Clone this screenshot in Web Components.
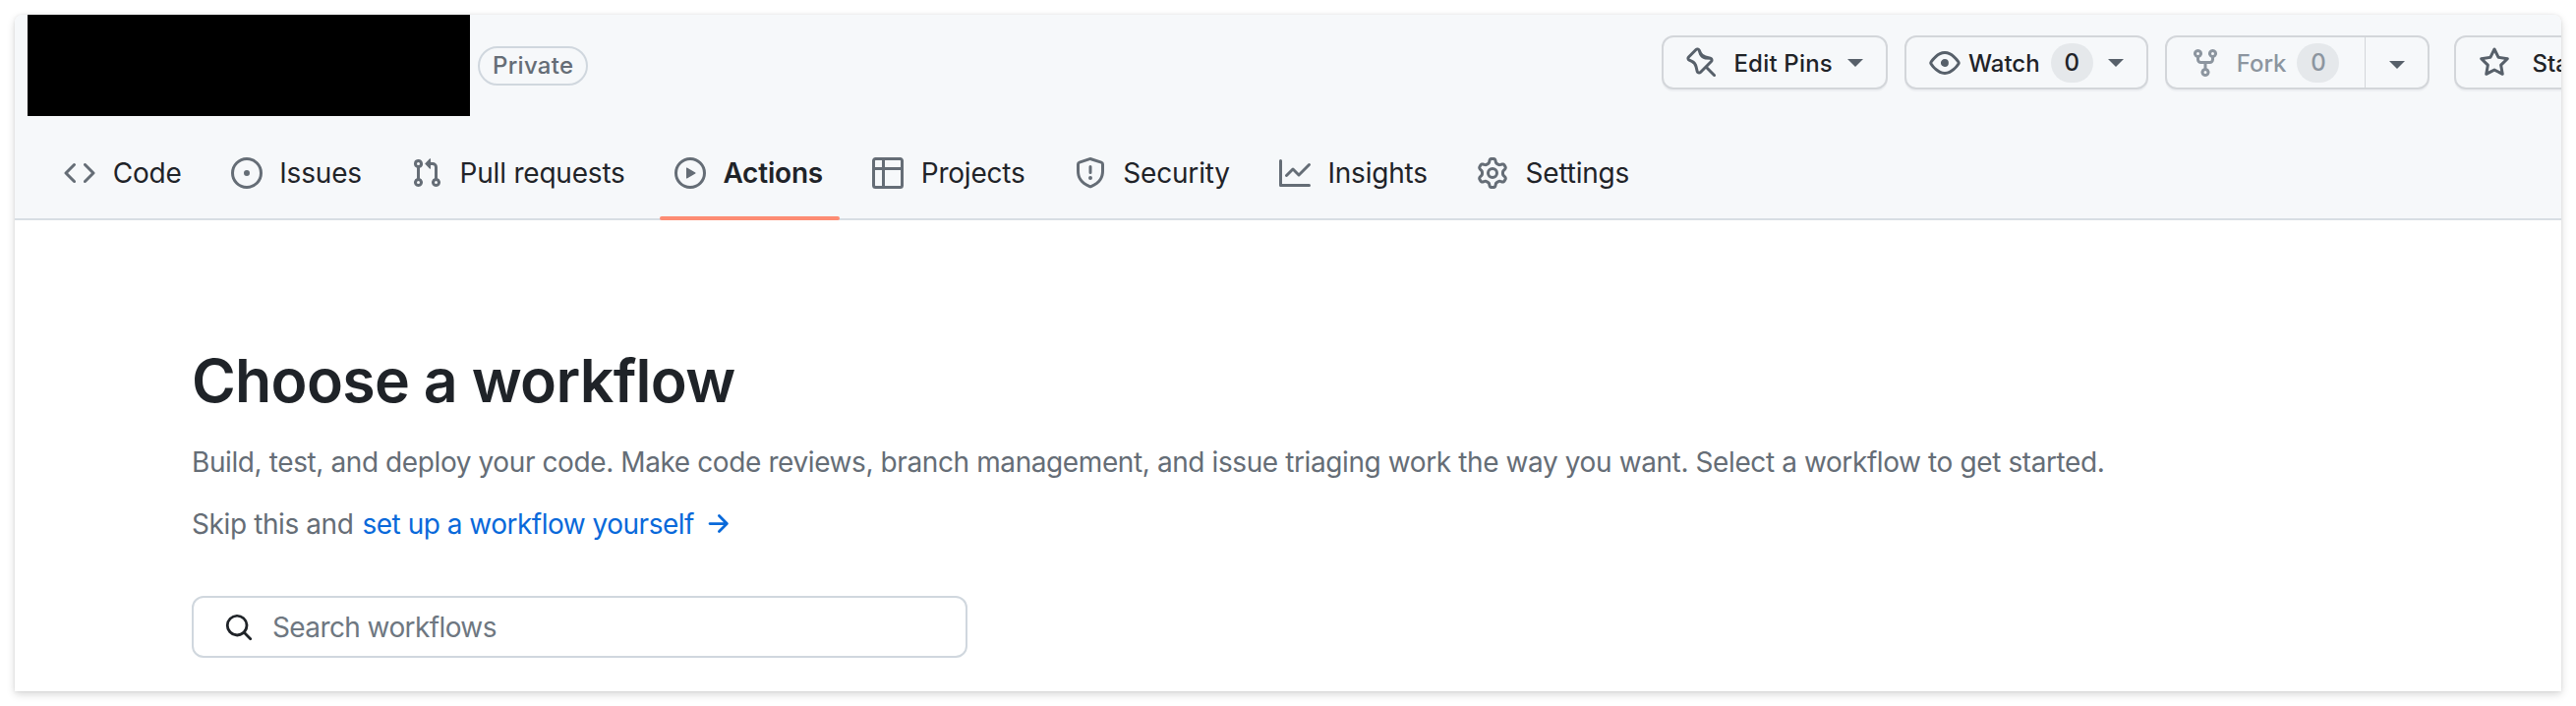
<!DOCTYPE html>
<html>
<head>
<meta charset="utf-8">
<title>Choose a workflow</title>
<style>
    html, body { margin: 0; background: #fff; }
    body { font-family: Inter, "Liberation Sans", sans-serif; color: #1f2328; }
</style>
</head>
<body>
<repo-window>
    <repo-head slot="head"></repo-head>
    <workflow-intro></workflow-intro>
</repo-window>

<script>
const ICONS = {
    code: 'm11.28 3.22 4.25 4.25a.75.75 0 0 1 0 1.06l-4.25 4.25a.749.749 0 0 1-1.275-.326.749.749 0 0 1 .215-.734L13.94 8l-3.72-3.72a.749.749 0 0 1 .326-1.275.749.749 0 0 1 .734.215Zm-6.56 0a.751.751 0 0 1 1.042.018.751.751 0 0 1 .018 1.042L2.06 8l3.72 3.72a.749.749 0 0 1-.326 1.275.749.749 0 0 1-.734-.215L.47 8.53a.75.75 0 0 1 0-1.06Z',
    issue: 'M8 9.5a1.5 1.5 0 1 0 0-3 1.5 1.5 0 0 0 0 3Z M8 0a8 8 0 1 1 0 16A8 8 0 0 1 8 0ZM1.5 8a6.5 6.5 0 1 0 13 0 6.5 6.5 0 0 0-13 0Z',
    pull: 'M1.5 3.25a2.25 2.25 0 1 1 3 2.122v5.256a2.251 2.251 0 1 1-1.5 0V5.372A2.25 2.25 0 0 1 1.5 3.25Zm5.677-.177L9.573.677A.25.25 0 0 1 10 .854V2.5h1A2.5 2.5 0 0 1 13.5 5v5.628a2.251 2.251 0 1 1-1.5 0V5a1 1 0 0 0-1-1h-1v1.646a.25.25 0 0 1-.427.177L7.177 3.427a.25.25 0 0 1 0-.354ZM3.75 2.5a.75.75 0 1 0 0 1.5.75.75 0 0 0 0-1.5Zm0 9.5a.75.75 0 1 0 0 1.5.75.75 0 0 0 0-1.5Zm8.25.75a.75.75 0 1 0 1.5 0 .75.75 0 0 0-1.5 0Z',
    play: 'M8 0a8 8 0 1 1 0 16A8 8 0 0 1 8 0ZM1.5 8a6.5 6.5 0 1 0 13 0 6.5 6.5 0 0 0-13 0Zm4.879-2.773 4.264 2.559a.25.25 0 0 1 0 .428l-4.264 2.559A.25.25 0 0 1 6 10.559V5.442a.25.25 0 0 1 .379-.215Z',
    table: 'M0 1.75C0 .784.784 0 1.75 0h12.5C15.216 0 16 .784 16 1.75v12.5A1.75 1.75 0 0 1 14.25 16H1.75A1.75 1.75 0 0 1 0 14.25ZM6.5 6.5v8h7.75a.25.25 0 0 0 .25-.25V6.5Zm8-1.5V1.75a.25.25 0 0 0-.25-.25H6.5V5Zm-13 1.5v7.75c0 .138.112.25.25.25H5v-8ZM5 5V1.5H1.75a.25.25 0 0 0-.25.25V5Z',
    shield: 'M7.467.133a1.748 1.748 0 0 1 1.066 0l5.25 1.68A1.75 1.75 0 0 1 15 3.48V7c0 1.566-.32 3.182-1.303 4.682-.983 1.498-2.585 2.813-5.032 3.855a1.697 1.697 0 0 1-1.33 0c-2.447-1.042-4.049-2.357-5.032-3.855C1.32 10.182 1 8.566 1 7V3.48a1.75 1.75 0 0 1 1.217-1.667Zm.61 1.429a.25.25 0 0 0-.153 0l-5.25 1.68a.25.25 0 0 0-.174.238V7c0 1.358.275 2.666 1.057 3.86.784 1.194 2.121 2.34 4.366 3.297a.196.196 0 0 0 .154 0c2.245-.956 3.582-2.104 4.366-3.298C13.225 9.666 13.5 8.36 13.5 7V3.48a.251.251 0 0 0-.174-.237l-5.25-1.68ZM8.75 4.75v3a.75.75 0 0 1-1.5 0v-3a.75.75 0 0 1 1.5 0ZM9 10.5a1 1 0 1 1-2 0 1 1 0 0 1 2 0Z',
    graph: 'M1.5 1.75V13.5h13.75a.75.75 0 0 1 0 1.5H.75a.75.75 0 0 1-.75-.75V1.75a.75.75 0 0 1 1.5 0Zm14.28 2.53-5.25 5.25a.75.75 0 0 1-1.06 0L7 7.06 4.28 9.78a.751.751 0 0 1-1.042-.018.751.751 0 0 1-.018-1.042l3.25-3.25a.75.75 0 0 1 1.06 0L10 7.94l4.72-4.72a.751.751 0 0 1 1.042.018.751.751 0 0 1 .018 1.042Z',
    gear: 'M8 0a8.2 8.2 0 0 1 .701.031C9.444.095 9.99.645 10.16 1.29l.288 1.107c.018.066.079.158.212.224.231.114.454.243.668.386.123.082.233.09.299.071l1.103-.303c.644-.176 1.392.021 1.82.63.27.385.506.792.704 1.218.315.675.111 1.422-.364 1.891l-.814.806c-.049.048-.098.147-.088.294.016.257.016.515 0 .772-.01.147.038.246.088.294l.814.806c.475.469.679 1.216.364 1.891a7.977 7.977 0 0 1-.704 1.217c-.428.61-1.176.807-1.82.63l-1.102-.302c-.067-.019-.177-.011-.3.071a5.909 5.909 0 0 1-.668.386c-.133.066-.194.158-.211.224l-.29 1.106c-.168.646-.715 1.196-1.458 1.26a8.006 8.006 0 0 1-1.402 0c-.743-.064-1.289-.614-1.458-1.26l-.289-1.106c-.018-.066-.079-.158-.212-.224a5.738 5.738 0 0 1-.668-.386c-.123-.082-.233-.09-.299-.071l-1.103.303c-.644.176-1.392-.021-1.82-.63a8.12 8.12 0 0 1-.704-1.218c-.315-.675-.111-1.422.363-1.891l.815-.806c.05-.048.098-.147.088-.294a6.214 6.214 0 0 1 0-.772c.01-.147-.038-.246-.088-.294l-.815-.806C.635 6.045.431 5.298.746 4.623a7.92 7.92 0 0 1 .704-1.217c.428-.61 1.176-.807 1.82-.63l1.102.302c.067.019.177.011.3-.071.214-.143.437-.272.668-.386.133-.066.194-.158.211-.224l.29-1.106C6.009.645 6.556.095 7.299.03 7.53.01 7.764 0 8 0Zm-.571 1.525c-.036.003-.108.036-.137.146l-.289 1.105c-.147.561-.549.967-.998 1.189-.173.086-.34.183-.5.29-.417.278-.97.423-1.529.27l-1.103-.303c-.109-.03-.175.016-.195.045-.22.312-.412.644-.573.99-.014.031-.021.11.059.19l.815.806c.411.406.562.957.53 1.456a4.709 4.709 0 0 0 0 .582c.032.499-.119 1.05-.53 1.456l-.815.806c-.081.08-.073.159-.059.19.162.346.353.677.573.989.02.03.085.076.195.046l1.102-.303c.56-.153 1.113-.008 1.53.27.161.107.328.204.501.29.447.222.85.629.997 1.189l.289 1.105c.029.109.101.143.137.146a6.6 6.6 0 0 0 1.142 0c.036-.003.108-.036.137-.146l.289-1.105c.147-.561.549-.967.998-1.189.173-.086.34-.183.5-.29.417-.278.97-.423 1.529-.27l1.103.303c.109.029.175-.016.195-.045.22-.313.411-.644.573-.99.014-.031.021-.11-.059-.19l-.815-.806c-.411-.406-.562-.957-.53-1.456a4.709 4.709 0 0 0 0-.582c-.032-.499.119-1.05.53-1.456l.815-.806c.081-.08.073-.159.059-.19a6.464 6.464 0 0 0-.573-.989c-.02-.03-.085-.076-.195-.046l-1.102.303c-.56.153-1.113.008-1.53-.27a4.44 4.44 0 0 0-.501-.29c-.447-.222-.85-.629-.997-1.189l-.289-1.105c-.029-.11-.101-.143-.137-.146a6.6 6.6 0 0 0-1.142 0ZM11 8a3 3 0 1 1-6 0 3 3 0 0 1 6 0ZM9.5 8a1.5 1.5 0 1 0-3.001.001A1.5 1.5 0 0 0 9.5 8Z',
    pin: 'M4.456.734a1.75 1.75 0 0 1 2.826.504l.613 1.327a3.08 3.08 0 0 0 2.084 1.707l2.454.584c1.332.317 1.8 1.972.832 2.94L11.06 10l3.72 3.72a.748.748 0 0 1-.332 1.265.75.75 0 0 1-.729-.205L10 11.06l-2.204 2.205c-.968.968-2.623.5-2.94-.832l-.584-2.454a3.08 3.08 0 0 0-1.707-2.084l-1.327-.613a1.75 1.75 0 0 1-.504-2.826L4.456.734ZM5.92 1.866a.25.25 0 0 0-.404-.072L1.794 5.516a.25.25 0 0 0 .072.404l1.328.613A4.582 4.582 0 0 1 5.73 9.63l.584 2.454a.25.25 0 0 0 .42.12l5.47-5.47a.25.25 0 0 0-.12-.42L9.63 6.23a4.582 4.582 0 0 1-3.098-2.537L5.92 1.866Z',
    eye: 'M8 2c1.981 0 3.671.992 4.933 2.078 1.27 1.091 2.187 2.345 2.637 3.023a1.62 1.62 0 0 1 0 1.798c-.45.678-1.367 1.932-2.637 3.023C11.67 13.008 9.981 14 8 14c-1.981 0-3.671-.992-4.933-2.078C1.797 10.83.88 9.576.43 8.898a1.62 1.62 0 0 1 0-1.798c.45-.677 1.367-1.931 2.637-3.022C4.33 2.992 6.019 2 8 2ZM1.679 7.932a.12.12 0 0 0 0 .136c.411.622 1.241 1.75 2.366 2.717C5.176 11.758 6.527 12.5 8 12.5c1.473 0 2.825-.742 3.955-1.715 1.124-.967 1.954-2.096 2.366-2.717a.12.12 0 0 0 0-.136c-.412-.621-1.242-1.75-2.366-2.717C10.824 4.242 9.473 3.5 8 3.5c-1.473 0-2.825.742-3.955 1.715-1.124.967-1.954 2.096-2.366 2.717ZM8 10a2 2 0 1 1-.001-3.999A2 2 0 0 1 8 10Z',
    fork: 'M5 5.372v.878c0 .414.336.75.75.75h4.5a.75.75 0 0 0 .75-.75v-.878a2.25 2.25 0 1 1 1.5 0v.878a2.25 2.25 0 0 1-2.25 2.25h-1.5v2.128a2.251 2.251 0 1 1-1.5 0V8.5h-1.5A2.25 2.25 0 0 1 3.5 6.25v-.878a2.25 2.25 0 1 1 1.5 0ZM5 3.25a.75.75 0 1 0-1.5 0 .75.75 0 0 0 1.5 0Zm6.75.75a.75.75 0 1 0 0-1.5.75.75 0 0 0 0 1.5Zm-3 8.75a.75.75 0 1 0-1.5 0 .75.75 0 0 0 1.5 0Z',
    star: 'M8 .25a.75.75 0 0 1 .673.418l1.882 3.815 4.21.612a.75.75 0 0 1 .416 1.279l-3.046 2.97.719 4.192a.751.751 0 0 1-1.088.791L8 12.347l-3.766 1.98a.75.75 0 0 1-1.088-.79l.72-4.194L.818 6.374a.75.75 0 0 1 .416-1.28l4.21-.611L7.327.668A.75.75 0 0 1 8 .25Zm0 2.445L6.615 5.5a.75.75 0 0 1-.564.41l-3.097.45 2.24 2.184a.75.75 0 0 1 .216.664l-.528 3.084 2.769-1.456a.75.75 0 0 1 .698 0l2.77 1.456-.53-3.084a.75.75 0 0 1 .216-.664l2.24-2.183-3.096-.45a.75.75 0 0 1-.564-.41L8 2.694Z',
    search: 'M10.68 11.74a6 6 0 0 1-7.922-8.982 6 6 0 0 1 8.982 7.922l3.04 3.04a.749.749 0 0 1-.326 1.275.749.749 0 0 1-.734-.215ZM11.5 7a4.499 4.499 0 1 0-8.997 0A4.499 4.499 0 0 0 11.5 7Z',
    arrow: 'M8.22 2.97a.75.75 0 0 1 1.06 0l4.25 4.25a.75.75 0 0 1 0 1.06l-4.25 4.25a.751.751 0 0 1-1.042-.018.751.751 0 0 1-.018-1.042l2.97-2.97H3.75a.75.75 0 0 1 0-1.5h7.44L8.22 4.03a.75.75 0 0 1 0-1.06Z'
};

class OctIcon extends HTMLElement {
    connectedCallback() {
        const size = this.getAttribute('size') || 32;
        const d = ICONS[this.getAttribute('name')];
        this.attachShadow({ mode: 'open' }).innerHTML = /*html*/`
            <style>
                :host { display: inline-flex; flex: none; color: inherit; }
                svg { display: block; fill: currentColor; }
            </style>
            <svg width="${size}" height="${size}" viewBox="0 0 16 16"><path fill-rule="evenodd" d="${d}"></path></svg>
        `;
    }
}
customElements.define('oct-icon', OctIcon);

class RepoWindow extends HTMLElement {
    connectedCallback() {
        this.attachShadow({ mode: 'open' }).innerHTML = /*html*/`
            <style>
                :host {
                    display: block;
                    box-sizing: border-box;
                    width: 2590px;
                    height: 688px;
                    margin: 15px;
                    background: #fff;
                    border-radius: 8px 8px 0 0;
                    overflow: hidden;
                    box-shadow: 0 3px 8px rgba(0, 0, 0, 0.16), 0 0 3px rgba(0, 0, 0, 0.08);
                }
            </style>
            <slot name="head"></slot>
            <slot></slot>
        `;
    }
}
customElements.define('repo-window', RepoWindow);

class RepoButton extends HTMLElement {
    connectedCallback() {
        const muted = this.hasAttribute('muted');
        const caret = this.hasAttribute('caret');
        const split = this.hasAttribute('split');
        const count = this.getAttribute('count');
        this.attachShadow({ mode: 'open' }).innerHTML = /*html*/`
            <style>
                :host {
                    display: inline-flex;
                    flex: none;
                    box-sizing: border-box;
                    height: 55px;
                    font-size: 24px;
                    font-weight: 500;
                    letter-spacing: var(--ls, 0);
                    color: #1f2328;
                    background: #f6f8fa;
                    border: 2px solid #d3d6da;
                    border-radius: 12px;
                    box-shadow: 0 2px 0 rgba(31, 35, 40, 0.04);
                }
                .main {
                    display: flex;
                    align-items: center;
                    padding: 1px var(--pad-r, 23px) 0 23px;
                }
                .label { color: ${muted ? '#8c959f' : 'inherit'}; margin-left: var(--label-gap, 16px); }
                oct-icon { color: ${muted ? '#8c959f' : '#57606a'}; }
                .count {
                    display: inline-block;
                    min-width: 43px;
                    box-sizing: border-box;
                    text-align: center;
                    line-height: 40px;
                    height: 40px;
                    margin-left: 11px;
                    border-radius: 20px;
                    background: #e5e8eb;
                    font-weight: 500;
                    color: ${muted ? '#8c959f' : '#1f2328'};
                }
                .caret {
                    width: 0; height: 0;
                    margin-left: 15px;
                    border: 8px solid transparent;
                    border-top-color: #57606a;
                    border-bottom: 0;
                }
                .split {
                    display: flex;
                    align-items: center;
                    padding: 0 23px 0 24px;
                    border-left: 1px solid #d3d6da;
                }
                .split .caret { margin-left: 0; margin-top: 4px; }
            </style>
            <div class="main">
                <oct-icon name="${this.getAttribute('icon')}"></oct-icon>
                <span class="label"><slot></slot></span>
                ${count !== null ? `<span class="count">${count}</span>` : ''}
                ${caret ? '<span class="caret"></span>' : ''}
            </div>
            ${split ? '<div class="split"><span class="caret"></span></div>' : ''}
        `;
    }
}
customElements.define('repo-button', RepoButton);

class RepoTab extends HTMLElement {
    connectedCallback() {
        this.attachShadow({ mode: 'open' }).innerHTML = /*html*/`
            <style>
                :host {
                    display: flex;
                    position: relative;
                    flex: none;
                    align-items: center;
                    box-sizing: border-box;
                    height: 92px;
                    padding: 0 17px 4px 15px;
                    font-size: 28px;
                    letter-spacing: -0.2px;
                    color: #1f2328;
                }
                :host([selected]) { font-weight: 600; }
                :host([selected])::after {
                    content: "";
                    position: absolute;
                    left: 0; right: 0; bottom: 0;
                    height: 4px;
                    background: #fd8c73;
                    border-radius: 2px;
                }
                oct-icon { color: #656d76; margin-right: 17.7px; }
            </style>
            <oct-icon name="${this.getAttribute('icon')}"></oct-icon>
            <slot></slot>
        `;
    }
}
customElements.define('repo-tab', RepoTab);

class RepoHead extends HTMLElement {
    connectedCallback() {
        this.attachShadow({ mode: 'open' }).innerHTML = /*html*/`
            <style>
                :host {
                    display: block;
                    box-sizing: border-box;
                    height: 209px;
                    background: #f6f8fa;
                    border-bottom: 2px solid #d8dee4;
                }
                .top { display: flex; align-items: center; height: 103px; padding-left: 13px; }
                .redacted { width: 450px; height: 103px; background: #000; flex: none; }
                .visibility {
                    flex: none;
                    box-sizing: border-box;
                    height: 40px;
                    margin-left: 8px;
                    padding: 0 13px;
                    line-height: 36px;
                    font-size: 24px;
                    font-weight: 500;
                    letter-spacing: 0.3px;
                    color: #656d76;
                    border: 2px solid #d0d7de;
                    border-radius: 20px;
                }
                .actions {
                    display: flex;
                    flex: none;
                    gap: 17px;
                    align-self: flex-start;
                    margin: 21px 0 0 1092px;
                }
                .tabs { display: flex; gap: 18px; margin-top: 14px; padding-left: 35px; }
            </style>
            <div class="top">
                <div class="redacted"></div>
                <span class="visibility">Private</span>
                <div class="actions">
                    <repo-button icon="pin" caret style="--ls:0.2px">Edit Pins</repo-button>
                    <repo-button icon="eye" caret count="0" style="--label-gap:8px">Watch</repo-button>
                    <repo-button icon="fork" muted count="0" split style="--pad-r:26px">Fork</repo-button>
                    <repo-button icon="star" style="--label-gap:22px;margin-left:8px">Star</repo-button>
                </div>
            </div>
            <nav class="tabs">
                <repo-tab icon="code">Code</repo-tab>
                <repo-tab icon="issue">Issues</repo-tab>
                <repo-tab icon="pull">Pull requests</repo-tab>
                <repo-tab icon="play" selected>Actions</repo-tab>
                <repo-tab icon="table">Projects</repo-tab>
                <repo-tab icon="shield">Security</repo-tab>
                <repo-tab icon="graph">Insights</repo-tab>
                <repo-tab icon="gear">Settings</repo-tab>
            </nav>
        `;
    }
}
customElements.define('repo-head', RepoHead);

class WorkflowIntro extends HTMLElement {
    connectedCallback() {
        this.attachShadow({ mode: 'open' }).innerHTML = /*html*/`
            <style>
                :host { display: block; padding: 125px 0 0 180px; }
                h1 {
                    margin: 0;
                    font-size: 60.8px;
                    line-height: 76px;
                    font-weight: 600;
                    letter-spacing: -0.7px;
                    color: #1f2328;
                }
                p {
                    margin: 0;
                    font-size: 28px;
                    line-height: 40px;
                    letter-spacing: -0.4px;
                    color: #656d76;
                }
                .desc { margin-top: 25px; }
                .skip { margin-top: 23px; display: flex; align-items: center; }
                a { color: #0969da; text-decoration: none; margin-left: 9px; letter-spacing: -0.5px; }
                .skip oct-icon { color: #0969da; margin-left: 9px; }
                .search {
                    display: flex;
                    align-items: center;
                    box-sizing: border-box;
                    width: 789px;
                    height: 63px;
                    margin-top: 53px;
                    padding-left: 31px;
                    border: 2px solid #d0d7de;
                    border-radius: 12px;
                    background: #fff;
                    font-size: 28px;
                    letter-spacing: -0.6px;
                    color: #6e7781;
                }
                .search oct-icon { color: #1f2328; margin-right: 19px; }
            </style>
            <h1>Choose a workflow</h1>
            <p class="desc">Build, test, and deploy your code. Make code reviews, branch management, and issue triaging work the way you want. Select a workflow to get started.</p>
            <p class="skip">Skip this and <a href="#">set up a workflow yourself</a><oct-icon name="arrow" size="30"></oct-icon></p>
            <div class="search"><oct-icon name="search" size="30"></oct-icon>Search workflows</div>
        `;
    }
}
customElements.define('workflow-intro', WorkflowIntro);
</script>
</body>
</html>
